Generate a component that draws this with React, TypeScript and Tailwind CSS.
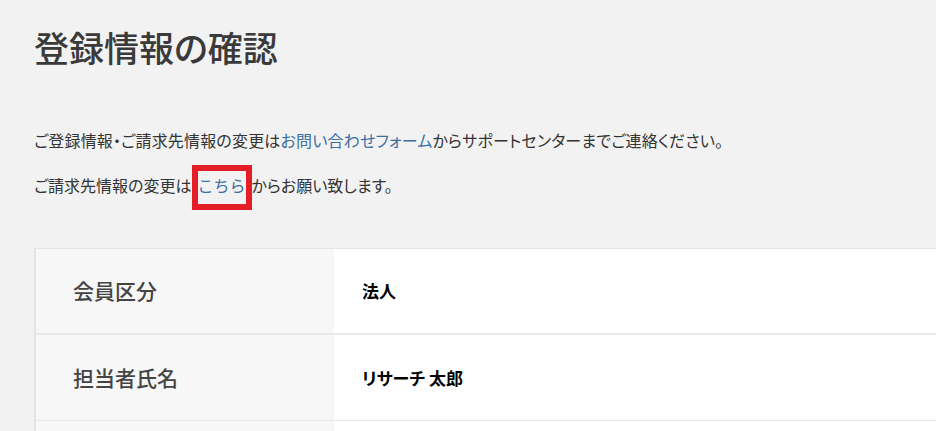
import React from "react";

const rows = [
  { label: "会員区分", value: "法人" },
  { label: "担当者氏名", value: "リサーチ 太郎" },
  { label: "", value: "" },
];

export default function App() {
  return (
    <div className="min-h-screen w-full overflow-hidden bg-[#f2f2f2] font-['Noto_Sans_CJK_JP','Noto_Sans',sans-serif] [font-feature-settings:'palt'] text-[#333]">
      <div className="pl-[34px]">
        <h1 className="pt-[29px] text-[35px] leading-none font-medium text-[#3a3a3a]">
          登録情報の確認
        </h1>
        <p className="mt-[68px] text-[16px] leading-none tracking-[0.18px]">
          ご登録情報・ご請求先情報の変更は
          <a className="text-[#3b6fa3]">お問い合わせフォーム</a>
          からサポートセンターまでご連絡ください。
        </p>
        <div className="mt-[17px] flex items-start text-[16px] leading-none">
          <span className="mt-[12px]">ご請求先情報の変更は</span>
          <span className="inline-block border-[6px] border-[#e41e26] pt-[6px] pb-[11px] text-[#3b6fa3] [font-feature-settings:normal]">
            こちら
          </span>
          <span className="mt-[12px]">からお願い致します。</span>
        </div>
        <div className="mt-[38px] w-[1000px] border-t border-l-2 border-[#e4e4e4] bg-white">
          {rows.map((r, i) => (
            <div
              key={i}
              className={`flex h-[86px] ${i === 0 ? "border-b-2" : "border-b"} border-[#e8e8e8]`}
            >
              <div className="flex w-[298px] items-center bg-[#f7f7f7] pl-[37px] text-[21px] font-medium text-[#444]">
                {r.label}
              </div>
              <div className="flex flex-1 items-center pl-[28px] text-[17px] font-bold text-black">
                {r.value}
              </div>
            </div>
          ))}
        </div>
      </div>
    </div>
  );
}
